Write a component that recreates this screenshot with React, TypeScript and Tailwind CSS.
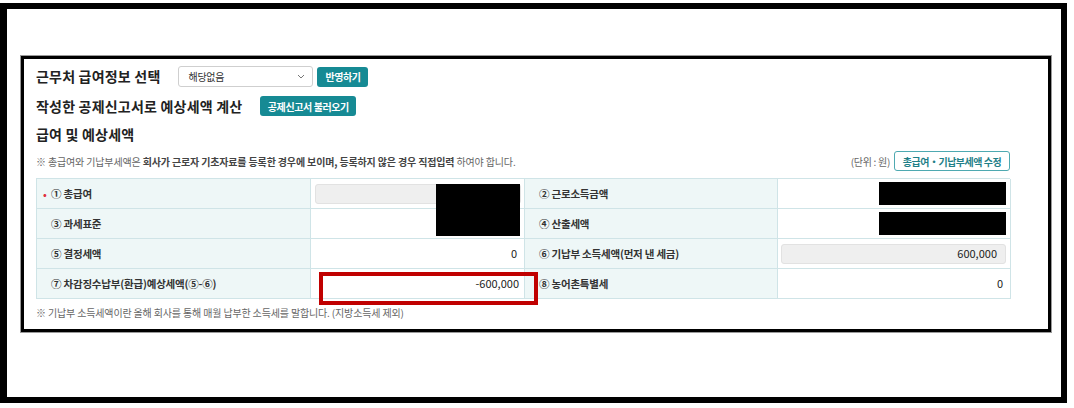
import React from "react";

const font = { fontFamily: '"Noto Sans CJK KR", "Noto Sans", sans-serif' };

function Label({ children, dot }: { children: React.ReactNode; dot?: boolean }) {
  return (
    <div className="relative flex h-[30px] items-center border-b border-r border-[#cfe4e7] bg-[#eef7f7] pl-[14px] text-[10.5px] font-bold tracking-[-0.2px] text-[#333]">
      {dot && <span className="absolute left-[6px] text-[10px] text-[#e0313c]">•</span>}
      {children}
    </div>
  );
}

function Value({ children, className = "" }: { children?: React.ReactNode; className?: string }) {
  return (
    <div className={`flex h-[30px] items-center justify-end border-b border-r border-[#cfe4e7] bg-white text-[11px] text-[#222] ${className}`}>
      {children}
    </div>
  );
}

export default function App() {
  return (
    <div className="h-[408px] w-[1074px] bg-white pt-[3px]" style={font}>
      <div className="h-[400px] w-[1067px] border-b-[6px] border-l-[7px] border-r-[6px] border-t-[6px] border-black pl-[14px] pt-[47px]">
        <div className="h-[276px] w-[1030px] border-[3px] border-black pl-[12px] pt-[7px] shadow-[0_0_0_1px_#9a9a9a]">
          {/* row 1 */}
          <div className="flex h-[21px] items-center">
            <span className="text-[14px] font-bold tracking-[0.2px] text-[#222]">근무처 급여정보 선택</span>
            <div className="ml-[18px] flex h-[21px] w-[135px] items-center justify-between rounded-[3px] border border-[#cfcfcf] bg-white pl-[9px] pr-[7px]">
              <span className="text-[10px] tracking-[-0.3px] text-[#333]">해당없음</span>
              <svg width="8" height="5" viewBox="0 0 8 5" fill="none">
                <path d="M1 1l3 3 3-3" stroke="#777" strokeWidth="1" />
              </svg>
            </div>
            <div className="ml-[4px] flex h-[20px] w-[51px] items-center justify-center rounded-[3px] bg-[#168a94] text-[10px] font-bold tracking-[-0.4px] text-white">
              반영하기
            </div>
          </div>
          {/* row 2 */}
          <div className="mt-[9px] flex h-[20px] items-center">
            <span className="text-[14px] font-bold tracking-[0.2px] text-[#222]">작성한 공제신고서로 예상세액 계산</span>
            <div className="ml-[18px] flex h-[20px] w-[96px] items-center justify-center rounded-[3px] bg-[#168a94] text-[10px] font-bold tracking-[-0.4px] text-white">
              공제신고서 불러오기
            </div>
          </div>
          {/* row 3 */}
          <div className="mt-[9px] flex h-[18px] items-center">
            <span className="text-[14px] font-bold tracking-[0.2px] text-[#222]">급여 및 예상세액</span>
          </div>
          {/* note row */}
          <div className="mt-[8px] flex h-[20px] w-[974px] items-center justify-between">
            <span className="text-[10px] tracking-[-0.15px] text-[#666]">
              ※ 총급여와 기납부세액은 <span className="font-bold text-[#444]">회사가 근로자 기초자료를 등록한 경우에 보이며, 등록하지 않은 경우 직접입력</span> 하여야 합니다.
            </span>
            <div className="flex items-center">
              <span className="text-[10px] tracking-[-0.3px] text-[#666]">(단위 : 원)</span>
              <div className="ml-[4px] flex h-[20px] w-[116px] items-center justify-center rounded-[3px] border border-[#4ea9b1] bg-white text-[10px] font-bold tracking-[-0.5px] text-[#1f7f88]">
                총급여・기납부세액 수정
              </div>
            </div>
          </div>
          {/* table */}
          <div className="relative mt-[7px] w-[974px]">
            <div className="grid grid-cols-[274px_214px_253px_233px] border-l border-t border-[#cfe4e7]">
              <Label dot>① 총급여</Label>
              <Value className="justify-start pl-[4px]">
                <div className="h-[20px] w-[206px] rounded-[3px] border border-[#e2e2e2] bg-[#efefef]" />
              </Value>
              <Label>② 근로소득금액</Label>
              <Value className="pr-[4px]">
                <div className="h-[23px] w-[127px] bg-black" />
              </Value>

              <Label>③ 과세표준</Label>
              <Value />
              <Label>④ 산출세액</Label>
              <Value className="pr-[4px]">
                <div className="h-[23px] w-[127px] bg-black" />
              </Value>

              <Label>⑤ 결정세액</Label>
              <Value className="pr-[7px]">0</Value>
              <Label>⑥ 기납부 소득세액(먼저 낸 세금)</Label>
              <Value className="pl-[3px] pr-[4px]">
                <div className="flex h-[20px] w-full items-center justify-end rounded-[3px] border border-[#e2e2e2] bg-[#efefef] pr-[8px]">
                  600,000
                </div>
              </Value>

              <Label>⑦ 차감징수납부(환급)예상세액(⑤-⑥)</Label>
              <Value className="pr-[5px]">-600,000</Value>
              <Label>⑧ 농어촌특별세</Label>
              <Value className="pr-[7px]">0</Value>
            </div>
            <div className="absolute left-[400px] top-[6px] h-[52px] w-[84px] bg-black" />
            <div className="absolute left-[283px] top-[94px] h-[33px] w-[219px] border-[4px] border-[#c00000]" />
          </div>
          {/* bottom note */}
          <div className="mt-[6px] text-[10px] tracking-[-0.15px] text-[#666]">
            ※ 기납부 소득세액이란 올해 회사를 통해 매월 납부한 소득세를 말합니다. (지방소득세 제외)
          </div>
        </div>
      </div>
    </div>
  );
}
